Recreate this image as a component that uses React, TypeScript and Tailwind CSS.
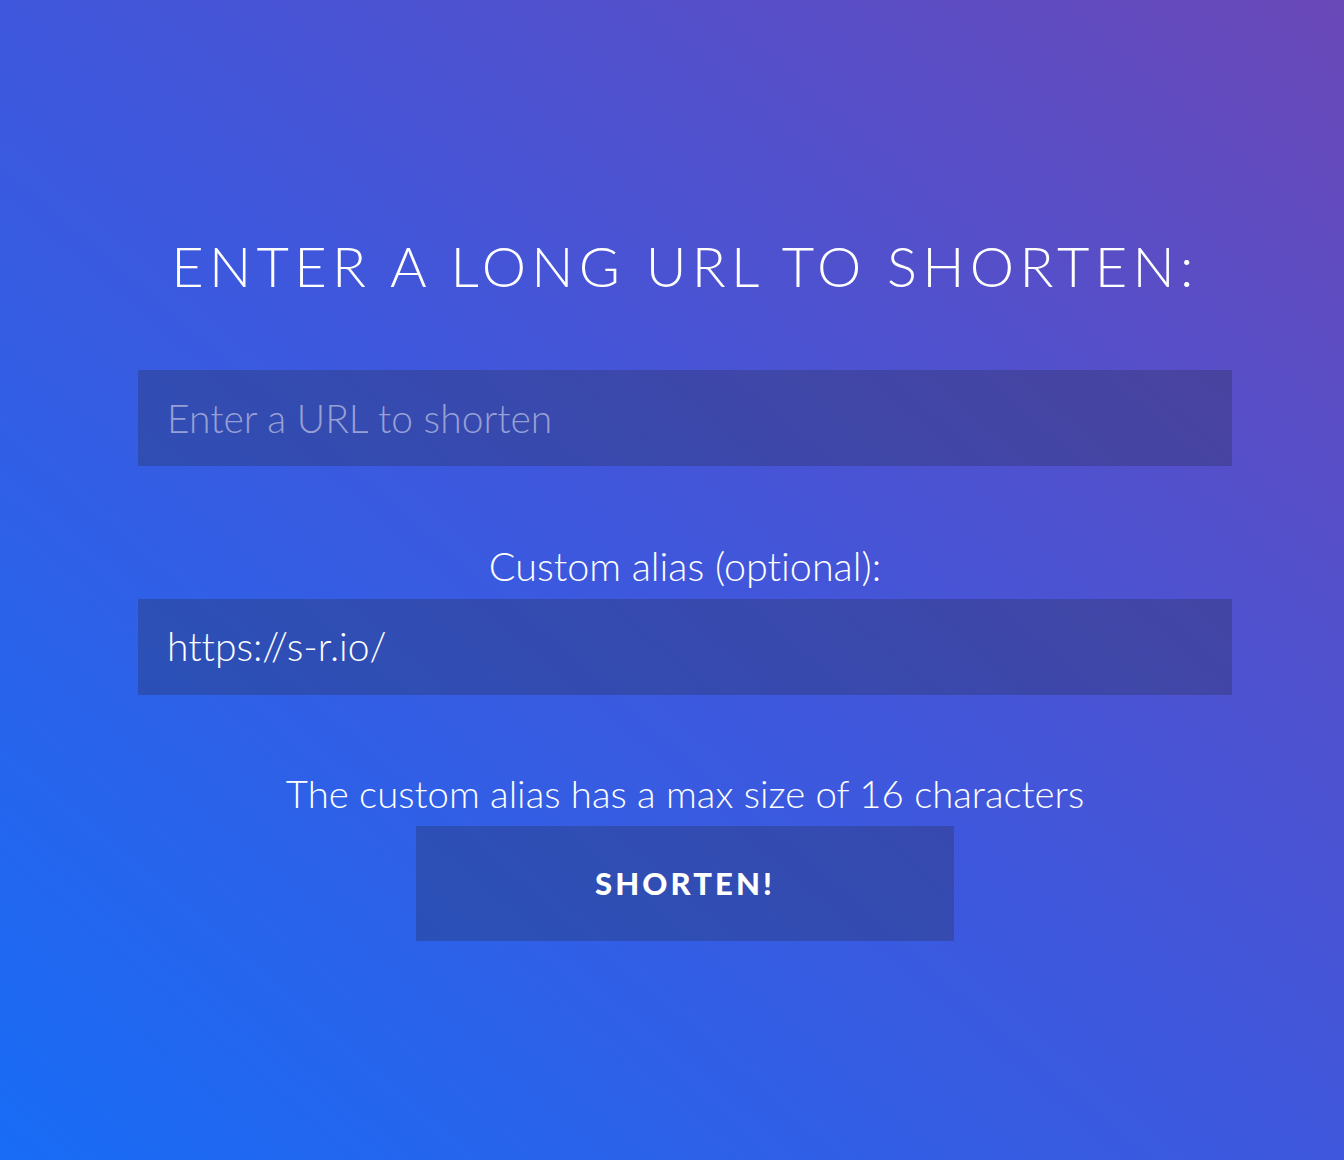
export default function App() {
  return (
    <main className="relative min-h-[1160px] w-full overflow-hidden bg-[linear-gradient(to_top_right,#186cf6_0%,#3f57dc_50%,#6a48b8_100%)] font-['Lato','Open_Sans',sans-serif] text-white [font-variant-ligatures:none]">
      <div className="ml-[138px] flex w-[1094px] flex-col items-center pt-[238px]">
        <h1 className="text-[56px] font-light leading-none tracking-[0.094em]">
          ENTER A LONG URL TO SHORTEN:
        </h1>

        <input
          type="text"
          placeholder="Enter a URL to shorten"
          className="mt-[76px] h-[96px] w-full bg-[rgba(40,42,70,0.3)] pl-[29px] text-[39px] font-light text-white outline-none [font-variant-ligatures:none] placeholder:text-[#97a0d4]"
        />

        <label className="mt-[80px] text-[39.5px] font-light leading-none">Custom alias (optional):</label>

        <div className="mt-[13px] flex h-[96px] w-full items-center bg-[rgba(40,42,70,0.3)] pl-[29px] text-[39px] font-light">
          https://s-r.io/
        </div>

        <p className="mt-[79px] text-[38.3px] font-light leading-none">
          The custom alias has a max size of 16 characters
        </p>

        <button className="mt-[14px] h-[115px] w-[538px] bg-[rgba(40,42,70,0.3)] text-[31px] font-black tracking-[0.1em] text-white">
          SHORTEN!
        </button>
      </div>
    </main>
  );
}
